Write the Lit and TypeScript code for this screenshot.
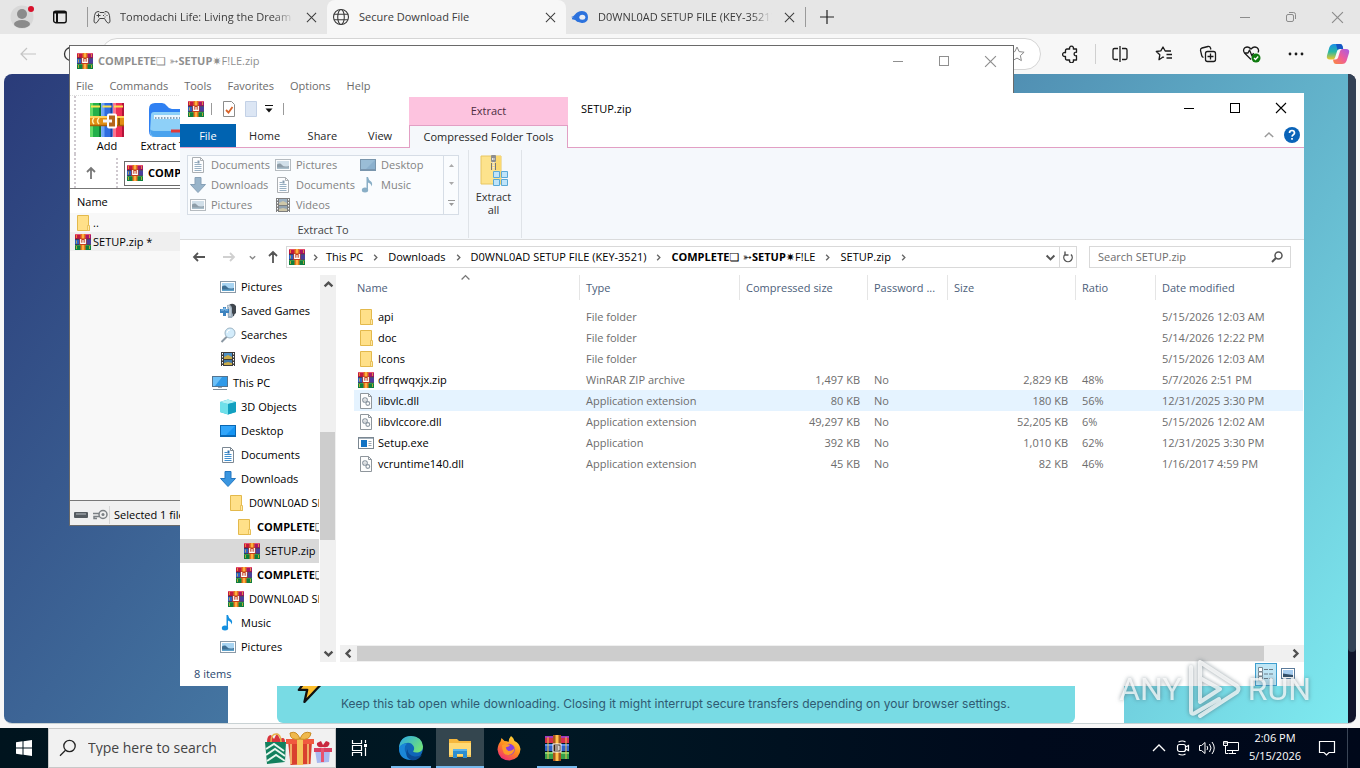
import { LitElement, html, css, svg, nothing, TemplateResult } from "lit";
import { customElement, state } from "lit/decorators.js";
import { classMap } from "lit/directives/class-map.js";

/* ---------- icons ---------- */

const icon = (w: number, h: number, body: unknown, box = `0 0 ${w} ${h}`) =>
  html`<svg width=${w} height=${h} viewBox=${box} fill="none" aria-hidden="true">${body}</svg>`;

const rar = () => icon(16, 16, svg`
  <rect width="16" height="5" y="0" fill="#c2183f"/><rect x="10" width="6" height="5" fill="#a81668"/>
  <path d="M0 .5h16" stroke="#e4506f"/>
  <rect width="16" height="5" y="5.500" fill="#4a3f9c"/><rect width="4" height="5" y="5.500" fill="#2b62c4"/>
  <rect width="16" height="5" y="11" fill="#0e7f3d"/><path d="M0 11.500h16" stroke="#35b34c"/>
  <path d="M0 5.300h16M0 10.700h16" stroke="#1f1835" stroke-width=".8"/>
  <path d="M1.500 1v3M1.500 6.500v3M1.500 12v3M14.500 1v3M14.500 12v3" stroke="#f7b733" opacity=".7"/>
  <rect x="5.500" width="5" height="16" fill="#e8741e"/><rect x="7" width="2" height="16" fill="#fbb040"/>
  <rect x="4.500" y="4.500" width="7" height="6.500" fill="#c4401c"/>
  <path d="M5.700 5v4.300h4.600V5M8 6v3" stroke="#fff" stroke-width="1.200"/>`);

const folder = () => icon(16, 16, svg`
  <path d="M2.500.5h11v10l1 1v4H2.500z" fill="#ffe089" stroke="#e3b94c"/>
  <path d="M12.500 10.500h2v5h-2z" fill="#ffe9a8" stroke="#e3b94c" stroke-width=".8"/>`);

const picture = () => icon(16, 16, svg`
  <rect x=".5" y="2.500" width="15" height="11" fill="#fff" stroke="#8a9aa8"/>
  <rect x="2" y="4" width="12" height="8" fill="#a8d4f2"/>
  <path d="M2 7.500q3-2 5 .5t7 1V12H2z" fill="#3f6f93"/><path d="M2 10.500h12V12H2z" fill="#5fa3cc"/>`);

const games = () => icon(16, 16, svg`
  <path d="M9 2q4-3 7 1v7q-2 1-2 3l-3 1-3-5z" fill="#3f464e"/>
  <path d="M7 2q4-1 5 3v5q2 2 0 5H8z" fill="#9fb0bf"/><path d="M8 3q2 0 2 3v7" stroke="#dbe4ec"/>
  <path d="M0 6h3V4h3v2h3v4H6v3H3v-3H0z" fill="#3d83bf"/><path d="M1 7h3V5h1v2h3" stroke="#8fc5ee"/>`);

const lens = () => icon(16, 16, svg`
  <path d="M7 9.500 1.500 15" stroke="#8b98a3" stroke-width="2"/>
  <circle cx="10" cy="6" r="5" fill="#d3ecfb" stroke="#9db4c4"/><path d="M7 6q0-3 3-3" stroke="#fff"/>`);

const film = () => icon(16, 16, svg`
  <rect x="1" y="1" width="14" height="14" fill="#3b3b3b"/>
  <rect x="4" y="2" width="8" height="6" fill="#4b8fc4"/><rect x="4" y="9" width="8" height="5" fill="#3f78a8"/>
  <path d="M4 6l4-2 4 2v2H4zM4 12l4-1 4 1v2H4z" fill="#c9ab48"/>
  <path d="M2.500 2v13M13.500 2v13" stroke="#fff" stroke-dasharray="1.500 1.500"/>`);

const pc = () => icon(16, 16, svg`
  <rect x=".5" y="1.500" width="15" height="10" fill="#2f9ae8" stroke="#54748f"/>
  <path d="M1 2h9L3 11H1z" fill="#6cc0f7"/><path d="M1 14.500h14" stroke="#7e8d98"/><path d="M6 12.500h4" stroke="#9aa8b3"/>`);

const cube = () => icon(16, 16, svg`
  <path d="M0 3 8 .5 16 3v10l-8 2.500L0 13z" fill="#20b4cf"/><path d="M0 3l8 2v10.500L0 13z" fill="#6fe0ea"/>
  <path d="M0 3 8 .5 16 3 8 5z" fill="#b3f1f4"/><path d="M8 5l8-2v10l-8 2.500z" fill="#12a0c0"/>`);

const desk = () => icon(16, 16, svg`
  <rect x=".5" y="2.500" width="15" height="11" fill="#1594f2" stroke="#0a67b2"/>
  <path d="M1 3h14L5 13H1z" fill="#32a6fb"/><path d="M1 12.500h14" stroke="#0b69b8"/>`);

const doc = () => icon(16, 16, svg`
  <path d="M2.500.5h8l3 3v12h-11z" fill="#fff" stroke="#7c8893"/><path d="M10.500.5v3h3" stroke="#7c8893"/>
  <path d="M4.500 5.500h3M4.500 7.500h7M4.500 9.500h7M4.500 11.500h7M4.500 13.500h7" stroke="#3f8fd0"/>
  <path d="M8.500 3.500v3" stroke="#2b6fae" stroke-width="2"/>`);

const down = () => icon(16, 16, svg`<path d="M5 .5h6v7h4.500L8 15.500.5 7.500H5z" fill="#3a96e0" stroke="#2477c0"/>`);

const note = () => icon(16, 16, svg`
  <ellipse cx="5" cy="13" rx="3.200" ry="2.500" fill="#1590e0"/>
  <path d="M6.500 0h1.500q.5 3 3 4.500 2 2 .5 5-.2-3-3.500-4v7.500H6.500z" fill="#1590e0"/>`);

const dll = () => icon(16, 16, svg`
  <path d="M2.500.5h8l3 3v12h-11z" fill="#fdfdfd" stroke="#8f969c"/><path d="M10.500.5v3h3" stroke="#8f969c"/>
  <circle cx="7" cy="7" r="2.300" stroke="#8b96a0" stroke-width="1.100"/><circle cx="9.800" cy="10.500" r="1.900" stroke="#8b96a0" stroke-width="1.100"/>
  <circle cx="7" cy="7" r=".6" fill="#6d7780"/>`);

const exe = () => icon(16, 16, svg`
  <rect x=".5" y="2.500" width="15" height="11" fill="#fff" stroke="#7b8791"/><path d="M1 3.500h14" stroke="#a6b2bd"/>
  <rect x="3" y="5" width="6" height="7" fill="#1273c4"/><path d="M10.500 6.500h3M10.500 8.500h3M10.500 10.500h3" stroke="#9aa5af"/>`);

const chevron = (dir: "up" | "down" | "left" | "right", size = 10, width = 1.5) => {
  const d = { up: "M2 6.500l3-3 3 3", down: "M2 3.500l3 3 3-3", left: "M6.500 2l-3 3 3 3", right: "M3.500 2l3 3-3 3" }[dir];
  return icon(size, size, svg`<path d=${d} stroke="currentColor" stroke-width=${width}/>`, "0 0 10 10");
};
const arrow = (dir: "left" | "right" | "up") => {
  const d = { left: "M13 7H2M6 3L2 7l4 4", right: "M1 7h11M8 3l4 4-4 4", up: "M7 13V2M3 6l4-4 4 4" }[dir];
  return icon(14, 14, svg`<path d=${d} stroke="currentColor" stroke-width="1.800"/>`);
};
const cross = (s: number) => icon(s, s, svg`<path d="M1 1l10 10M11 1L1 11" stroke="currentColor" stroke-width="1.100"/>`, "0 0 12 12");
const minimize = () => icon(12, 12, svg`<path d="M1 6.500h10" stroke="currentColor"/>`);
const maximize = () => icon(12, 12, svg`<rect x="1.500" y="1.500" width="9" height="9" stroke="currentColor"/>`);
const restore = () => icon(12, 12, svg`<rect x="1.500" y="3.500" width="7" height="7" rx="1.500" stroke="currentColor"/><path d="M4 1.500h4.500q2 0 2 2V8" stroke="currentColor"/>`);

const gamepad = () => icon(18, 16, svg`
  <path d="M5 2.500q-3 0-3.500 4L1 12q0 2 1.500 2T5 12l1.500-2.500h5L13 12q1 2 2.500 2T17 12l-.5-5.500q-.5-4-3.500-4-1.500 0-2 1H7q-.5-1-2-1z" stroke="#444"/>
  <path d="M5.500 4.500v4M3.500 6.500h4M12 4.500v1M12 7.500v1M10 6.500h1M13.500 6.500h1" stroke="#444"/>`);
const globe = () => icon(18, 18, svg`
  <g stroke="#3b3b3b" stroke-width="1.100"><circle cx="9" cy="9" r="7.500"/><ellipse cx="9" cy="9" rx="3.300" ry="7.500"/><path d="M2 6.300h14M2 11.700h14"/></g>`);
const flame = () => icon(18, 16, svg`
  <path d="M0 8q2.500-.5 4-2.500Q6.500 2 11 2q6 .5 6 6.200 0 5.300-5.500 5.800-4 .3-6.500-3Q3 8.500 0 8z" fill="#2c72dd"/>
  <ellipse cx="11.300" cy="8.200" rx="3" ry="2.500" fill="#e9edf5"/><path d="M1 9.500q4 0 6 3" stroke="#2c72dd" stroke-width="1.500"/>`);

const star = () => icon(18, 18, svg`<path d="M9 2l2.100 4.600 5 .6-3.700 3.400 1 5L9 13.100 4.600 15.600l1-5L1.900 7.200l5-.6z" stroke="#8a8a8a" stroke-linejoin="round"/>`);
const puzzle = () => icon(18, 18, svg`<path d="M5 4h2.700a2 2 0 1 1 3.600 0H14.500v3.300a1.800 1.800 0 1 0 0 3.400V15h-3.200a2 2 0 1 1-3.600 0H5q-1.500 0-1.500-1.500v-2.200a2 2 0 1 1 0-3.600V5.500Q3.500 4 5 4z" stroke="#1b1b1b" stroke-width="1.300" stroke-linejoin="round"/>`);
const split = () => icon(18, 18, svg`<path d="M7 3.500H3.500A1.500 1.500 0 0 0 2 5v8a1.500 1.500 0 0 0 1.500 1.500H7M11 3.500h3.500A1.500 1.500 0 0 1 16 5v8a1.500 1.500 0 0 1-1.500 1.500H11M9 1v16" stroke="#1b1b1b" stroke-width="1.300"/>`);
const favs = () => icon(18, 18, svg`<path d="M9 12.500 8 12l-4 2.700.8-4.900L1.300 6.500l4.500-.6L8 2l2.200 4H16M11.500 9.500H17M11.500 13H17M14 6H11" stroke="#1b1b1b" stroke-width="1.300" stroke-linejoin="round"/>`);
const collections = () => icon(18, 18, svg`<rect x="6.500" y="6.500" width="10" height="10" rx="2" stroke="#1b1b1b" stroke-width="1.300"/><path d="M11.500 8.500v6M8.500 11.500h6M4.500 12.500q-1.500-.5-1.800-2L1.500 5.500Q1.200 3.500 3 3l6-1.500q2-.3 2.500 1.500l.4 1.500" stroke="#1b1b1b" stroke-width="1.300"/>`);
const health = () => icon(20, 18, svg`<path d="M9 14.500 2.500 8q-2-3 .3-5.200Q6 .7 9 4q3-3.300 6.200-1.200Q17.500 5 16 7.500M2 8h4l1.500-3 2.500 6 1.500-3" stroke="#1b1b1b" stroke-width="1.300" stroke-linejoin="round"/><circle cx="14" cy="13" r="4.500" fill="#0f7b0f"/><path d="M12 13l1.500 1.500 2.700-3" stroke="#fff" stroke-width="1.300"/>`);
const dots = () => icon(18, 18, svg`<g fill="#1b1b1b"><circle cx="3" cy="9" r="1.400"/><circle cx="9" cy="9" r="1.400"/><circle cx="15" cy="9" r="1.400"/></g>`);
const copilot = () => icon(24, 22, svg`
  <defs><linearGradient id="ca" x1="0" y1="0" x2="0" y2="1"><stop stop-color="#1b8fe8"/><stop offset=".5" stop-color="#27b8a4"/><stop offset="1" stop-color="#f0c828"/></linearGradient>
  <linearGradient id="cb" x1="1" y1="0" x2="0" y2="1"><stop stop-color="#a45ce8"/><stop offset=".5" stop-color="#ee5c9a"/><stop offset="1" stop-color="#fb8a3c"/></linearGradient></defs>
  <path d="M8 1h6q2 0 2.500 2l.7 3h-3.500q-2 0-2.600 2l-2 6.500q-.6 2-2.600 2H4q-4 0-3-4L3.300 4.500Q4.500 1 8 1z" fill="url(#ca)"/>
  <path d="M16 21h-6q-2 0-2.500-2L7 16.500h2.500q2 0 2.600-2l2-6.500q.6-2 2.600-2H20q4 0 3 4l-2.300 7.500Q19.500 21 16 21z" fill="url(#cb)"/>
  <path d="M10 1h4q2 0 2.500 2l.7 3h-3.500q-1.500 0-2.200 1z" fill="#1756c4"/>`);

const books = () => icon(34, 34, svg`
  <rect x="0" y="0" width="11" height="34" rx="1" fill="#23b04a"/><rect x="0" width="3" height="34" fill="#63dc68"/><rect x="9" width="2" height="34" fill="#0d7a33"/>
  <rect x="11.500" y="0" width="11" height="34" rx="1" fill="#2f6de0"/><rect x="11.500" width="3" height="34" fill="#6ba5fa"/><rect x="20.500" width="2" height="34" fill="#1b3fa6"/>
  <rect x="23" y="0" width="11" height="34" rx="1" fill="#ee2f55"/><rect x="23" width="3" height="34" fill="#fb7590"/><rect x="32" width="2" height="34" fill="#b3133a"/>
  <path d="M1 3.500h9M12.500 3.500h9M24 3.500h9" stroke="#fbe14e" stroke-width="2"/>
  <rect y="13" width="34" height="10" fill="#e28f14"/><path d="M0 14h34" stroke="#ffd35e" stroke-width="2"/><path d="M0 22.500h34" stroke="#a85f08" stroke-width="1.500"/>
  <path d="M4 15q-3 3 0 6M9 15q-3 3 0 6" stroke="#fff0b0" stroke-width="1.500"/>
  <rect x="18" y="11.500" width="8" height="13" rx="1" fill="#b5651a" stroke="#fff" stroke-width="2"/><rect x="13" y="16.500" width="9" height="3" fill="#f4f4f4"/><path d="M29 15v7" stroke="#7a3c05" stroke-width="1.500"/>`);

const zipFolder = () => icon(34, 34, svg`
  <path d="M0 6q0-6 6-6h7q3 0 5 3t5 3h11v28H6q-6 0-6-6z" fill="#2f80f2"/>
  <path d="M2 12q0-3 3-3h29v25H6q-5 0-5-5z" fill="#8ed0f8"/><path d="M1 26q0 8 6 8h27v-6H7q-5 0-6-2z" fill="#4aa3ee"/>
  <rect x="5" y="12" width="29" height="4" fill="#eaf6fe"/><path d="M6 15h28" stroke="#8aa2b8" stroke-width="2" stroke-dasharray="1.500 1.500"/>
  <path d="M22 28h12" stroke="#e23a3a" stroke-width="3"/>`);

const extractAll = () => icon(28, 32, svg`
  <path d="M1 1h20v28H1z" fill="#fde38c" stroke="#e8c660"/><path d="M12 1h9v14h-9z" fill="#fbd970"/>
  <rect x="11" y="0" width="5" height="7" rx="1" fill="#8e8e8e"/><path d="M12 4h3M13.500 7v8" stroke="#e8e8e8" stroke-width="2" stroke-dasharray="1.500 1"/><path d="M11.500 8v7M15.500 8v7" stroke="#777"/>
  <g fill="#bfe4fa" stroke="#5ba9d6"><path d="M13.500 16.500h6v6h-6zM21.500 16.500h6v6h-6zM13.500 24.500h6v6h-6zM21.500 24.500h6v6h-6z"/></g>`);

const bolt = () => icon(26, 30, svg`<path d="M15 1 2 18h9L8 31 26 12h-9l5-11z" fill="#fdbf2d" stroke="#111" stroke-width="2.500" stroke-linejoin="round"/>`, "0 0 28 32");

const edge = () => icon(26, 26, svg`
  <defs><linearGradient id="ea" x1="0" y1="0" x2="1" y2=".6"><stop stop-color="#2aa8e8"/><stop offset="1" stop-color="#6fe07a"/></linearGradient></defs>
  <circle cx="13" cy="13" r="12" fill="#0f66b8"/>
  <path d="M1 13Q2 1 13 1q11 .5 12 10.500 0 5-5 6-4 .3-5-1 2-2.500.5-5.500-3-5-9-2.500Q2.500 10.500 1 13z" fill="url(#ea)"/>
  <path d="M1 13q2-5 8-4.500-3 2.500-2 7.500 2 6.500 9 8.500-15 2-15-11.500z" fill="#1b87d8"/>
  <path d="M9.500 14q0 6 7 7.500 4 .5 7.500-2-4 7-11 5.500Q6 22 9.500 14z" fill="#0a4a94"/>`);
const fileExplorer = () => icon(24, 22, svg`
  <path d="M1 2h8l2 2h12v16H1z" fill="#f6b73c"/><path d="M1 6h22v13H1z" fill="#ffd974"/>
  <path d="M5 21V12h14v9h-4v-4H9v4z" fill="#2f8fd0"/><path d="M5 12h14v2H5z" fill="#5cb3ea"/><path d="M1 18h4v2H1zM19 18h4v2h-4z" fill="#f6c453"/>`);
const firefox = () => icon(24, 26, svg`
  <defs><linearGradient id="fa" x1=".8" y1="0" x2=".2" y2="1"><stop stop-color="#ffe03c"/><stop offset=".5" stop-color="#ff8a1e"/><stop offset="1" stop-color="#f0257c"/></linearGradient></defs>
  <path d="M14 1q3 2 3.500 5 5 2 6 8-.5 10-11 11.500Q1.500 25 .5 14.500 1 9 3.500 6.500L4.500 3l3 3q3 0 4 1 .5-4 2.500-6z" fill="url(#fa)"/>
  <circle cx="12" cy="14.500" r="5.800" fill="#8a3ee0"/><path d="M5 10q4-2 8 0-1 2-4 2.200-.5 2 2.500 3.800 4 0 6-3-.5 7-6.500 7T5 10z" fill="#ff9a2a"/>`);
const rarStack = () => icon(26, 26, svg`
  <rect x="1" y="1" width="24" height="7" fill="#d32f4c"/><path d="M1 2h24" stroke="#a13bb8" stroke-width="2"/>
  <rect x="1" y="9" width="24" height="7" fill="#2f62c8"/><path d="M1 10h24" stroke="#5c8ff0" stroke-width="2"/>
  <rect x="1" y="17" width="24" height="7" fill="#36a04a"/><path d="M1 18h24" stroke="#7fd06f" stroke-width="2"/>
  <path d="M4 2v22M22 2v22" stroke="#f0c24a"/><rect x="9" y="0" width="8" height="26" fill="#a8561a"/><path d="M13 0v26" stroke="#ffc14d" stroke-width="3"/>
  <rect x="9" y="9" width="8" height="8" fill="#3a2310" stroke="#fff"/><path d="M11 11h4v4h-4M11 13h4" stroke="#fff" stroke-width="1.200"/>`);
const gifts = () => icon(70, 34, svg`
  <path d="M2 11h21l-1 20-18 2z" fill="#12805e"/><path d="M3 18l8-5 10 7M3 24l9-6 10 7M4 30l9-6 9 6" stroke="#e8f6ee" stroke-width="2"/>
  <path d="M4 11q0-7 4-7l3 4 3-6 3 6q5-3 5 3z" fill="#d8343c"/><path d="M8 11q0-8 5-8t5 8" stroke="#e8b44c" stroke-width="1.500"/>
  <path d="M25 10h24l-1.500 23-20 1z" fill="#d9402f"/><path d="M23 8h28v5H23z" fill="#f0593f"/><path d="M34 8h6v26h-6z" fill="#f5c45b"/><path d="M28 13v20M45 13v20" stroke="#f7d07a" stroke-width="1.500"/>
  <path d="M37 8q-10 2-10-6 7-3 10 6zM37 8q10 2 11-6-8-3-11 6z" fill="#efb94c" stroke="#c98c24"/>
  <path d="M52 19h15l-1 12-12 1z" fill="#a9b9f0"/><path d="M51 17h18v4H51z" fill="#d94062"/><path d="M58 17h3v14h-3z" fill="#e8526f"/><path d="M60 16q-7 1-6-4l4-2 2 4 3-4q5 1 3 4-1 3-6 2z" fill="#c9283f"/>`);

/* ---------- data ---------- */

const FANCY = html`<b>COMPLETE</b><span class="sym">❏ ➳</span><b>SETUP</b><span class="sym">✷</span>F!LE`;

interface FileRow { name: string; icon: () => TemplateResult; type: string; packed?: string; pwd?: string; size?: string; ratio?: string; date: string; }
const FILES: FileRow[] = [
  { name: "api", icon: folder, type: "File folder", date: "5/15/2026 12:03 AM" },
  { name: "doc", icon: folder, type: "File folder", date: "5/14/2026 12:22 PM" },
  { name: "Icons", icon: folder, type: "File folder", date: "5/15/2026 12:03 AM" },
  { name: "dfrqwqxjx.zip", icon: rar, type: "WinRAR ZIP archive", packed: "1,497 KB", pwd: "No", size: "2,829 KB", ratio: "48%", date: "5/7/2026 2:51 PM" },
  { name: "libvlc.dll", icon: dll, type: "Application extension", packed: "80 KB", pwd: "No", size: "180 KB", ratio: "56%", date: "12/31/2025 3:30 PM" },
  { name: "libvlccore.dll", icon: dll, type: "Application extension", packed: "49,297 KB", pwd: "No", size: "52,205 KB", ratio: "6%", date: "5/15/2026 12:02 AM" },
  { name: "Setup.exe", icon: exe, type: "Application", packed: "392 KB", pwd: "No", size: "1,010 KB", ratio: "62%", date: "12/31/2025 3:30 PM" },
  { name: "vcruntime140.dll", icon: dll, type: "Application extension", packed: "45 KB", pwd: "No", size: "82 KB", ratio: "46%", date: "1/16/2017 4:59 PM" },
];

const TREE: { label: unknown; icon: () => TemplateResult; level: number; selected?: boolean }[] = [
  { label: "Pictures", icon: picture, level: 1 },
  { label: "Saved Games", icon: games, level: 1 },
  { label: "Searches", icon: lens, level: 1 },
  { label: "Videos", icon: film, level: 1 },
  { label: "This PC", icon: pc, level: 0 },
  { label: "3D Objects", icon: cube, level: 1 },
  { label: "Desktop", icon: desk, level: 1 },
  { label: "Documents", icon: doc, level: 1 },
  { label: "Downloads", icon: down, level: 1 },
  { label: "D0WNL0AD SETUP FILE (KEY-3521)", icon: folder, level: 2 },
  { label: FANCY, icon: folder, level: 3 },
  { label: "SETUP.zip", icon: rar, level: 4, selected: true },
  { label: FANCY, icon: rar, level: 3 },
  { label: "D0WNL0AD SETUP FILE (KEY-3521)", icon: rar, level: 2 },
  { label: "Music", icon: note, level: 1 },
  { label: "Pictures", icon: picture, level: 1 },
];

const UI = css`
  :host { display: block; font-family: "Open Sans", "Noto Sans", "DejaVu Sans", sans-serif; font-size: 11px; line-height: 16px; }
  * { box-sizing: border-box; }
  button { font: inherit; color: inherit; background: none; border: 0; padding: 0; margin: 0; display: flex; align-items: center; justify-content: center; white-space: nowrap; }
  a { color: inherit; text-decoration: none; white-space: nowrap; }
  input { font: inherit; border: 0; background: none; padding: 0; min-width: 0; outline: none; }
  svg { display: block; flex: none; }
  ul { list-style: none; margin: 0; padding: 0; }
  .sym { font-family: "DejaVu Sans", sans-serif; font-size: 11px; line-height: 12px; }
  .caption { display: flex; }
  .caption button { width: 46px; height: 30px; }
`;

/* ---------- browser ---------- */

@customElement("edge-browser")
class EdgeBrowser extends LitElement {
  static styles = [UI, css`
    :host { display: flex; flex-direction: column; background: #f7f7f7; color: #3b3b3b; min-height: 0; }
    .tabs { display: flex; align-items: center; height: 34px; background: #e6e6e6; flex: none; }
    .avatar { width: 44px; }
    .work { width: 32px; margin-right: 11px; }
    .line { width: 1px; height: 20px; background: #9a9a9a; }
    .line.soft { background: #d0d0d0; margin: 0 2px; }
    .tab { display: flex; align-items: center; height: 34px; width: 239px; padding: 0 8px 0 5px; gap: 9px; border-radius: 8px 8px 0 0; }
    .tab.active { background: #f7f7f7; }
    .tab a { flex: 1; overflow: hidden; }
    .tab.fade a { mask-image: linear-gradient(90deg, #000 88%, transparent); }
    .tab button { width: 16px; height: 16px; }
    .new { width: 42px; height: 34px; color: #222; }
    .grow { flex: 1; }
    .tabs .caption { color: #8c8c8c; }
    .tools { display: flex; align-items: center; height: 40px; flex: none; padding: 0 2px 0 19px; color: #222; }
    .tools > button { width: 44px; height: 32px; }
    .nav { display: flex; color: #c4c4c4; gap: 26px; }
    .bar { flex: 1; height: 32px; margin: 0 8px 0 22px; background: #fff; border: 1px solid #d5d5d5; border-radius: 16px; display: flex; align-items: center; padding: 0 14px; }
    .bar input { flex: 1; }
    .tools > .last { width: 40px; }
    .page { flex: 1; min-height: 0; margin: 0 4px 4px; border-radius: 8px; overflow: hidden; display: flex; border-bottom: 1px solid #c9d2d4; }
    .hero { flex: 1; display: flex; justify-content: center; align-items: flex-end; background: linear-gradient(128deg, #2a3b79, #4a82aa 48%, #7eeaf0); }
    .panel { width: 896px; background: #fff; padding: 0 49px; }
    .tip { background: #78dbe4; border-radius: 6px; height: 96px; display: flex; align-items: flex-end; padding: 0 20px 10px; gap: 18px; font: 12px/18px Inter, "Open Sans", sans-serif; color: #2f5a72; }
    .tip svg { margin-bottom: 10px; }
    .tip p { margin: 0; }
    .scroll { width: 8px; background: #11142b; }
    .thumb { height: 89%; background: #334155; border-radius: 0 0 4px 4px; }
  `];
  render() {
    return html`
      <div class="tabs" role="tablist">
        <button class="avatar" aria-label="Profile">${icon(26, 26, svg`
          <circle cx="13" cy="13" r="11.500" fill="#d8d8d8"/><circle cx="13" cy="10" r="5" fill="#8b8b8b"/><ellipse cx="13" cy="20" rx="8" ry="4" fill="#8b8b8b"/><circle cx="22" cy="5" r="3" fill="#d8122c"/>`)}</button>
        <button class="work" aria-label="Workspaces">${icon(16, 16, svg`<rect x="1.700" y="2.200" width="12.500" height="11.500" rx="2" stroke="#111" stroke-width="1.400"/><path d="M1.500 3.500h13M5 3v10" stroke="#111" stroke-width="2"/>`)}</button>
        <span class="line"></span>
        <div class="tab fade">${gamepad()}<a href="#">Tomodachi Life: Living the Dream</a><button aria-label="Close tab">${cross(11)}</button></div>
        <div class="tab active">${globe()}<a href="#">Secure Download File</a><button aria-label="Close tab">${cross(11)}</button></div>
        <div class="tab fade">${flame()}<a href="#">D0WNL0AD SETUP FILE (KEY-3521)</a><button aria-label="Close tab">${cross(11)}</button></div>
        <span class="line"></span>
        <button class="new" aria-label="New tab">${icon(16, 16, svg`<path d="M8 1v14M1 8h14" stroke="currentColor" stroke-width="1.200"/>`)}</button>
        <div class="grow"></div>
        <div class="caption"><button aria-label="Minimize">${minimize()}</button><button aria-label="Restore">${restore()}</button><button aria-label="Close">${cross(13)}</button></div>
      </div>
      <div class="tools">
        <div class="nav">
          <button aria-label="Back">${icon(18, 16, svg`<path d="M17 8H2M8 2L2 8l6 6" stroke="currentColor" stroke-width="1.200"/>`)}</button>
          <button aria-label="Reload">${icon(16, 16, svg`<circle cx="8" cy="8" r="6.500" stroke="#333" stroke-width="1.300"/>`)}</button>
        </div>
        <div class="bar"><input aria-label="Address" /><button aria-label="Favorite this page">${star()}</button></div>
        <button aria-label="Extensions">${puzzle()}</button><span class="line soft"></span>
        <button aria-label="Split screen">${split()}</button><button aria-label="Favorites">${favs()}</button>
        <button aria-label="Collections">${collections()}</button><button aria-label="Browser essentials">${health()}</button>
        <button aria-label="Settings">${dots()}</button><button class="last" aria-label="Copilot">${copilot()}</button>
      </div>
      <div class="page">
        <div class="hero"><div class="panel"><div class="tip">${bolt()}<p>Keep this tab open while downloading. Closing it might interrupt secure transfers depending on your browser settings.</p></div></div></div>
        <div class="scroll"><div class="thumb"></div></div>
      </div>`;
  }
}

/* ---------- archive manager ---------- */

@customElement("archive-window")
class ArchiveWindow extends LitElement {
  static styles = [UI, css`
    :host { display: flex; flex-direction: column; background: #fff; border: 1px solid #6a6a6a; color: #000; }
    .title { display: flex; align-items: center; height: 30px; padding-left: 7px; gap: 5px; color: #8f8f8f; flex: none; }
    .title span.name { flex: 1; }
    .menu { display: flex; gap: 16px; padding: 2px 6px; height: 20px; color: #6b6b6b; border-bottom: 1px dotted #ddd; flex: none; }
    .tools { display: flex; gap: 6px; padding: 7px 8px 0 9px; height: 58px; margin-left: 4px; border-left: 2px dotted #cfc9cf; flex: none; }
    .tools button { flex-direction: column; width: 44px; justify-content: flex-start; gap: 1px; }
    .tools button.wide { width: 62px; }
    .path { display: flex; align-items: center; height: 34px; margin-left: 4px; border-left: 2px dotted #cfc9cf; flex: none; color: #777; padding-top: 4px; }
    .up { width: 30px; height: 24px; }
    .path .box { flex: 1; height: 25px; margin-left: 6px; border: 1px solid #6a6a6a; display: flex; align-items: center; gap: 5px; padding: 0 2px; color: #000; }
    .gap { width: 12px; height: 30px; border-right: 2px dotted #cfc9cf; }
    .list { flex: 1; min-height: 0; background: #f8f8f8; border: 1px solid #777; border-width: 1px 0; }
    .head { height: 24px; background: #fff; padding: 5px 7px 0; }
    .item { height: 19px; display: flex; align-items: center; gap: 2px; padding-left: 5px; }
    .item.on { background: #efefef; }
    .status { height: 24px; background: #f0f0f0; display: flex; align-items: center; gap: 4px; padding: 3px 3px 0; flex: none; }
    .status .led { border-right: 1px solid #d5d5d5; height: 18px; display: flex; align-items: center; }
  `];
  render() {
    return html`
      <div class="title">${rar()}<span class="name">${FANCY}.zip</span>
        <div class="caption"><button aria-label="Minimize">${minimize()}</button><button aria-label="Maximize">${maximize()}</button><button aria-label="Close">${cross(13)}</button></div>
      </div>
      <div class="menu">${["File", "Commands", "Tools", "Favorites", "Options", "Help"].map(m => html`<button>${m}</button>`)}</div>
      <div class="tools"><button>${books()}Add</button><button class="wide">${zipFolder()}Extract To</button></div>
      <div class="path"><button class="up" aria-label="Up">${arrow("up")}</button><span class="gap"></span><div class="box">${rar()}<span>${FANCY}.zip</span></div></div>
      <div class="list">
        <div class="head">Name</div>
        <div class="item">${folder()}..</div>
        <div class="item on">${rar()}SETUP.zip *</div>
      </div>
      <div class="status"><span class="led">${icon(36, 14, svg`
        <rect x="1" y="4" width="14" height="6" rx="1" fill="#555b60"/><path d="M3 6h10" stroke="#b8bec2"/>
        <circle cx="30" cy="6.500" r="4" stroke="#7b8084" stroke-width="1.500"/><circle cx="30" cy="6.500" r="1.500" fill="#7b8084"/><path d="M26 5.500h-6M26 8.500h-5v2h3" stroke="#7b8084" stroke-width="1.500"/>`)}</span><span>Selected 1 file</span></div>`;
  }
}

/* ---------- file explorer ---------- */

@customElement("explorer-window")
class ExplorerWindow extends LitElement {
  @state() private selected = 4;
  static styles = [UI, css`
    :host { display: flex; flex-direction: column; background: #fff; color: #000; }
    .top { display: flex; flex: none; }
    .left { width: 229px; }
    .qat { display: flex; align-items: center; height: 31px; padding-left: 8px; }
    .qat button { width: 22px; height: 22px; }
    .qat button.first { width: 16px; }
    .qat i { width: 1px; height: 12px; background: #9a9a9a; margin: 0 6px 0 7px; }
    .qat button.more { width: 14px; }
    .tabs { display: flex; height: 24px; border-bottom: 1px solid #e29fc4; }
    .tabs button { width: 58px; height: 23px; color: #262626; }
    .tabs button.file { width: 56px; background: #0063b1; color: #fff; }
    .ctx { width: 159px; padding-top: 4px; display: flex; flex-direction: column; }
    .ctx span { height: 28px; background: #fdc3df; text-align: center; line-height: 28px; color: #4d2d3f; }
    .ctx button { height: 23px; background: #f5f8fb; border: 1px solid #e29fc4; border-bottom: 0; color: #262626; }
    .right { flex: 1; display: flex; flex-direction: column; border-bottom: 1px solid #e29fc4; }
    .bar { display: flex; justify-content: space-between; height: 30px; padding-left: 13px; line-height: 31px; }
    .aux { display: flex; justify-content: flex-end; gap: 8px; align-items: center; flex: 1; padding-right: 4px; color: #9a9a9a; }
    .ribbon { display: flex; height: 92px; background: #f5f8fc; border-bottom: 1px solid #dadbdc; flex: none; }
    .group { width: 289px; border-right: 1px solid #dfe3e8; margin: 2px 0 1px; padding: 5px 9px 0 7px; display: flex; flex-direction: column; justify-content: space-between; text-align: center; color: #444; }
    .gallery { display: flex; border: 1px solid #d6dde6; height: 60px; background: #fafcfe; }
    .gallery ul { flex: 1; display: grid; grid-template-columns: 85px 85px 1fr; grid-auto-rows: 20px; padding-left: 2px; align-content: start; }
    .gallery li button { gap: 5px; height: 18px; color: #838383; }
    .gallery li svg { filter: saturate(.45); opacity: .65; }
    .spin { width: 15px; border-left: 1px solid #d6dde6; display: flex; flex-direction: column; justify-content: space-around; align-items: center; }
    .extract { width: 53px; border-right: 1px solid #dfe3e8; margin: 2px 0 1px; padding: 5px 3px 0 0; flex-direction: column; justify-content: flex-start; line-height: 13px; gap: 3px; color: #333; }
    .address { display: flex; align-items: center; height: 33px; padding: 1px 13px 0 12px; flex: none; color: #555; }
    .hist { display: flex; align-items: center; }
    .hist button { width: 14px; height: 22px; }
    .hist .fwd { margin: 0 11px 0 16px; color: #d0d0d0; }
    .hist .rec { width: 10px; margin-right: 9px; color: #888; }
    .crumbs { flex: 1; display: flex; align-items: center; height: 22px; margin-left: 6px; border: 1px solid #d9d9d9; padding-left: 2px; color: #000; min-width: 0; }
    .crumbs .sep { width: 25px; display: flex; justify-content: center; color: #666; flex: none; }
    .crumbs .sep.s0 { width: 21px; }
    .crumbs .end { margin-left: auto; display: flex; color: #555; height: 100%; }
    .crumbs .end button { width: 17px; }
    .crumbs .end button + button { border-left: 1px solid #d9d9d9; }
    .search { width: 202px; height: 22px; margin-left: 12px; border: 1px solid #d9d9d9; display: flex; align-items: center; padding: 0 7px 0 8px; }
    .search input { flex: 1; }
    .search input::placeholder { color: #6d6d6d; opacity: 1; }
    .body { display: flex; flex: 1; min-height: 0; }
    .tree { width: 139px; padding-top: 2px; overflow: hidden; flex: none; }
    .tree li a { display: flex; align-items: center; height: 24px; gap: 5px; overflow: hidden; }
    .tree li a.l0 { padding-left: 32px; } .tree li a.l1 { padding-left: 40px; } .tree li a.l2 { padding-left: 48px; }
    .tree li a.l3 { padding-left: 56px; } .tree li a.l4 { padding-left: 64px; }
    .tree li a.on { background: #d9d9d9; }
    .vbar { width: 16px; background: #f0f0f0; display: flex; flex-direction: column; margin: 2px 0 0 1px; color: #505050; flex: none; }
    .vbar button { height: 18px; }
    .vbar .above { flex: 4; }
    .vbar .below { flex: 3; }
    .vbar .thumb { height: 108px; margin-right: 1px; background: #cdcdcd; }
    .main { flex: 1; margin-left: 4px; display: flex; flex-direction: column; min-width: 0; }
    .files { flex: 1; padding: 2px 1px 0 14px; min-height: 0; }
    table { width: 100%; table-layout: fixed; border-collapse: separate; border-spacing: 0; }
    th { font-weight: 400; text-align: left; height: 25px; color: #4c607a; border-right: 1px solid #e5e5e5; padding: 0 6px; white-space: nowrap; }
    th:first-child { padding-left: 3px; position: relative; }
    th:last-child { border-right: 0; }
    .sorted { position: absolute; left: 105px; top: -4px; color: #777; }
    tbody::before { content: ""; display: block; height: 6px; }
    td { height: 21px; padding: 0 6px; color: #6d6d6d; white-space: nowrap; overflow: hidden; }
    td:first-child { padding-left: 4px; color: #000; }
    td.num { text-align: right; padding-right: 8px; }
    td div { display: flex; align-items: center; gap: 4px; }
    tr.on td { background: #e5f3ff; }
    .c-name { width: 226px; } .c-type { width: 160px; } .c-big { width: 128px; } .c-small { width: 80px; }
    .hbar { height: 17px; background: #f0f0f0; display: flex; color: #505050; flex: none; }
    .hbar button { width: 17px; }
    .hbar .thumb { flex: 1; margin: 1px 22px 1px 0; background: #cdcdcd; }
    .hbar button:last-child { width: 18px; }
    .status { height: 24px; display: flex; justify-content: space-between; align-items: center; padding: 0 5px 0 14px; color: #29466e; flex: none; }
    .views { display: flex; }
    .views button { width: 22px; height: 23px; }
    .views .on { background: #bfe6f5; border: 1px solid #3f9fcf; }
  `];
  private gallery = [
    ["Documents", doc], ["Pictures", picture], ["Desktop", desk],
    ["Downloads", down], ["Documents", doc], ["Music", note],
    ["Pictures", picture], ["Videos", film],
  ] as [string, () => TemplateResult][];
  render() {
    const crumbs: unknown[] = ["This PC", "Downloads", "D0WNL0AD SETUP FILE (KEY-3521)", FANCY, "SETUP.zip"];
    return html`
      <div class="top">
        <div class="left">
          <div class="qat">
            <button class="first" aria-label="Window menu">${rar()}</button><i></i>
            <button aria-label="Properties">${icon(14, 16, svg`<path d="M1.500.5h8l3 3v12h-11z" fill="#fff" stroke="#8c8c8c"/><path d="M4 9l2.500 2.500L10.500 6" stroke="#d8642a" stroke-width="1.800"/>`)}</button>
            <button aria-label="New folder">${icon(14, 16, svg`<path d="M1.500.5h11v15h-11z" fill="#dce6f4" stroke="#c3d1e6"/>`)}</button>
            <button class="more" aria-label="Customize">${icon(10, 10, svg`<path d="M1 1.500h8" stroke="#111"/><path d="M1.500 4.500h7L5 8.500z" fill="#111"/>`)}</button><i></i>
          </div>
          <div class="tabs"><button class="file">File</button><button>Home</button><button>Share</button><button>View</button></div>
        </div>
        <div class="ctx"><span>Extract</span><button>Compressed Folder Tools</button></div>
        <div class="right">
          <div class="bar"><span>SETUP.zip</span><div class="caption"><button aria-label="Minimize">${minimize()}</button><button aria-label="Maximize">${maximize()}</button><button aria-label="Close">${cross(12)}</button></div></div>
          <div class="aux"><button aria-label="Collapse ribbon">${chevron("up", 14, 1)}</button><button aria-label="Help">${icon(16, 16, svg`<circle cx="8" cy="8" r="8" fill="#0a63b8"/><path d="M5.500 6q0-2.500 2.500-2.500T10.500 6q0 1-1.200 1.800T8 9.700M8 11v1.800" stroke="#fff" stroke-width="1.700"/>`)}</button></div>
        </div>
      </div>
      <div class="ribbon">
        <div class="group">
          <div class="gallery">
            <ul>${this.gallery.map(([t, i]) => html`<li><button>${i()}${t}</button></li>`)}</ul>
            <div class="spin">
              ${icon(7, 5, svg`<path d="M1 4h5L3.500 1z" fill="#aaa"/>`)}${icon(7, 5, svg`<path d="M1 1h5L3.500 4z" fill="#aaa"/>`)}${icon(7, 7, svg`<path d="M0 .5h7" stroke="#999"/><path d="M1 3h5L3.500 6z" fill="#999"/>`)}
            </div>
          </div>
          <span>Extract To</span>
        </div>
        <button class="extract">${extractAll()}<span>Extract<br />all</span></button>
      </div>
      <div class="address">
        <div class="hist">
          <button aria-label="Back">${arrow("left")}</button><button class="fwd" aria-label="Forward">${arrow("right")}</button>
          <button class="rec" aria-label="Recent">${chevron("down", 9)}</button><button aria-label="Up">${arrow("up")}</button>
        </div>
        <div class="crumbs">${rar()}<span class="sep s0">${chevron("right", 9)}</span>
          ${crumbs.map(c => html`<a href="#">${c}</a><span class="sep">${chevron("right", 9)}</span>`)}
          <div class="end"><button aria-label="Previous locations">${chevron("down", 13)}</button><button aria-label="Refresh">${icon(12, 12, svg`<path d="M3 3.500a4.200 4.200 0 1 0 6 0M3 .5v3.500h3.500" stroke="#555" stroke-width="1.400"/>`)}</button></div>
        </div>
        <div class="search"><input type="search" aria-label="Search" placeholder="Search SETUP.zip" />${icon(12, 12, svg`<circle cx="7.500" cy="4.500" r="3.500" stroke="#555" stroke-width="1.500"/><path d="M5 7l-4 4" stroke="#555" stroke-width="2"/>`)}</div>
      </div>
      <div class="body">
        <ul class="tree">${TREE.map(n => html`<li><a href="#" class=${classMap({ on: !!n.selected, ["l" + n.level]: true })}>${n.icon()}<span>${n.label}</span></a></li>`)}</ul>
        <div class="vbar"><button aria-label="Scroll up">${chevron("up", 13, 1.800)}</button><div class="above"></div><div class="thumb"></div><div class="below"></div><button aria-label="Scroll down">${chevron("down", 13, 1.800)}</button></div>
        <div class="main">
          <div class="files">
            <table>
              <colgroup><col class="c-name" /><col class="c-type" /><col class="c-big" /><col class="c-small" /><col class="c-big" /><col class="c-small" /><col /></colgroup>
              <thead><tr><th>Name<span class="sorted">${chevron("up", 13, 1)}</span></th><th>Type</th><th>Compressed size</th><th>Password ...</th><th>Size</th><th>Ratio</th><th>Date modified</th></tr></thead>
              <tbody>${FILES.map((f, i) => html`
                <tr class=${i === this.selected ? "on" : ""} @click=${() => (this.selected = i)}>
                  <td><div>${f.icon()}${f.name}</div></td><td>${f.type}</td><td class="num">${f.packed ?? nothing}</td><td>${f.pwd ?? nothing}</td>
                  <td class="num">${f.size ?? nothing}</td><td>${f.ratio ?? nothing}</td><td>${f.date}</td>
                </tr>`)}</tbody>
            </table>
          </div>
          <div class="hbar"><button aria-label="Scroll left">${chevron("left", 13, 1.800)}</button><div class="thumb"></div><button aria-label="Scroll right">${chevron("right", 13, 1.800)}</button></div>
        </div>
      </div>
      <div class="status"><span>8 items</span>
        <div class="views"><button class="on" aria-label="Details">${icon(16, 14, svg`<path d="M.5.5h4v4h-4zM.5 5h4v4h-4zM.5 9.500h4v4h-4z" fill="#fff" stroke="#7a8a94"/><path d="M6 2.500h4M11 2.500h4M6 7h4M11 7h4M6 11.500h4M11 11.500h4" stroke="#6a7a86"/>`)}</button>
        <button aria-label="Large icons">${icon(14, 12, svg`<rect x=".5" y=".5" width="13" height="10" fill="#fff" stroke="#5a7a9a"/><rect x="2" y="2" width="10" height="7" fill="#a6cdf0"/><path d="M2 5.500l3 .5 7 1V9H2z" fill="#33506a"/>`)}</button></div>
      </div>`;
  }
}

/* ---------- taskbar ---------- */

@customElement("task-bar")
class TaskBar extends LitElement {
  static styles = [UI, css`
    :host { display: flex; height: 40px; color: #fff; background: linear-gradient(90deg, #00141e, #001824 40%, #000a1c 75%, #00081a); }
    .start { width: 48px; }
    .search { width: 288px; background: #f1f1f1; border: 1px solid #c8c8c8; display: flex; align-items: center; gap: 11px; padding: 0 2px 0 10px; }
    .search input { flex: 1; font-size: 14px; }
    .search input::placeholder { color: #444; opacity: 1; }
    .view { width: 48px; margin-right: 3px; }
    .app { width: 40px; border-bottom: 2px solid transparent; margin: 0 4px; padding-top: 2px; }
    .app.run { border-color: #76b9ed; }
    .app.active { width: 48px; margin: 0 1px; background: #34464f; }
    .tray { margin-left: auto; display: flex; align-items: center; }
    .tray button { width: 24px; height: 40px; }
    .clock { width: 64px; text-align: center; line-height: 18px; padding-bottom: 2px; }
    .tray button.msg { width: 40px; }
    .peek { width: 13px; height: 40px; border-left: 1px solid #3a4556; }
  `];
  render() {
    return html`
      <button class="start" aria-label="Start">${icon(16, 16, svg`<path d="M0 2.200 6.500 1.300v6.200H0zM7.500 1.200 16 0v7.500H7.500zM0 8.500h6.500v6.200L0 13.800zM7.500 8.500H16V16l-8.500-1.200z" fill="#fff"/>`)}</button>
      <label class="search">${icon(18, 18, svg`<circle cx="10.500" cy="7" r="5.700" stroke="#222" stroke-width="1.300"/><path d="M6.500 11.200 1 16.800" stroke="#222" stroke-width="1.300"/>`)}<input aria-label="Type here to search" placeholder="Type here to search" />${gifts()}</label>
      <button class="view" aria-label="Task view">${icon(18, 16, svg`<path d="M1.500 0v3.500h9V0M1.500 16v-3.500h9V16M1.500 5.500h9v5h-9zM14.500 0v3M14.500 7.500V16" stroke="#fff" stroke-width="1.200"/><rect x="13" y="4" width="3" height="3" fill="#fff"/>`)}</button>
      <button class="app run" aria-label="Microsoft Edge">${edge()}</button>
      <button class="app run active" aria-label="File Explorer">${fileExplorer()}</button>
      <button class="app" aria-label="Firefox">${firefox()}</button>
      <button class="app run" aria-label="WinRAR">${rarStack()}</button>
      <div class="tray">
        <button aria-label="Hidden icons">${icon(14, 10, svg`<path d="M1 8l6-6 6 6" stroke="#fff" stroke-width="1.300"/>`)}</button>
        <button aria-label="Meet Now">${icon(14, 16, svg`<rect x="1.500" y="4.500" width="8" height="7" rx="2" stroke="#fff" stroke-width="1.200"/><path d="M9.500 7l3-1.500v5l-3-1.500M2.500 2q4-2 7 0M2.500 14q4 2 7 0" stroke="#fff" stroke-width="1.200"/>`)}</button>
        <button aria-label="Volume">${icon(18, 14, svg`<path d="M1.500 4.500h2L7 1.500v11l-3.500-3h-2zM9 5q1.500 2 0 4M11.500 3q3 4 0 8M14 1q4.500 6 0 12" stroke="#fff"/>`)}</button>
        <button aria-label="Network">${icon(18, 16, svg`<path d="M5.500 2.500h11v8H5M10.500 10.500v3M7 13.500h7M1.500 1.500h4v4h-4zM3.500 5.500v8h3" stroke="#fff"/><path d="M2 3h3" stroke="#fff"/>`)}</button>
        <div class="clock">2:06 PM<br />5/15/2026</div>
        <button class="msg" aria-label="Notifications">${icon(18, 18, svg`<path d="M1.500 2.500h15v11H11L8.500 16 6 13.500H1.500z" stroke="#fff" stroke-width="1.200"/>`)}</button>
        <div class="peek"></div>
      </div>`;
  }
}

/* ---------- desktop ---------- */

@customElement("app-root")
class AppRoot extends LitElement {
  static styles = [UI, css`
    :host { display: flex; flex-direction: column; height: 100vh; position: relative; overflow: hidden; }
    edge-browser { flex: 1; }
    task-bar { flex: none; }
    archive-window { position: absolute; left: 69px; right: 346px; top: 45px; bottom: 242px; }
    explorer-window { position: absolute; left: 180px; right: 56px; top: 93px; bottom: 82px; }
    .mark { position: absolute; right: 49px; bottom: 48px; display: flex; align-items: center; gap: 6px; color: rgba(255, 255, 255, .75); font: 32px/60px Roboto, "Liberation Sans", sans-serif; filter: drop-shadow(0 0 2px rgba(70, 90, 100, .8)); pointer-events: none; }
  `];
  render() {
    return html`
      <edge-browser></edge-browser>
      <task-bar></task-bar>
      <archive-window></archive-window>
      <explorer-window></explorer-window>
      <div class="mark"><span>ANY</span>${icon(54, 62, svg`
        <path d="M12 4v38M12 4l37 24q3 3 0 6L12 58M3 9v44q0 4 4 2l24-14M12 20l20 11-20 13" stroke="#fff" stroke-opacity=".75" stroke-width="4" stroke-linejoin="round" stroke-linecap="round"/>`)}<span>RUN</span></div>`;
  }
}
